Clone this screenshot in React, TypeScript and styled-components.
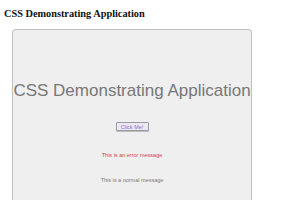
import React from "react";
import styled, { createGlobalStyle } from "styled-components";

const Global = createGlobalStyle`
  html, body { margin: 0; padding: 0; background: #ffffff; }
  body { width: 300px; height: 210px; overflow: hidden; }
`;

const Page = styled.div`
  padding: 8px 0 0 4px;
  display: flex;
  flex-direction: column;
`;

const Heading = styled.h1`
  margin: 0;
  font-family: "Liberation Serif", "Times New Roman", serif;
  font-weight: bold;
  font-size: 10.3px;
  line-height: 12px;
  color: #111;
`;

const Panel = styled.div`
  margin: 9px 0 0 8px;
  width: 240px;
  height: 171px;
  box-sizing: border-box;
  background: #efefef;
  border: 1px solid #c0c0c0;
  border-bottom: none;
  border-radius: 4px 4px 0 0;
  display: flex;
  flex-direction: column;
  align-items: center;
  padding-top: 51px;
`;

const Title = styled.div`
  font-family: "Liberation Sans", Arial, sans-serif;
  font-size: 17px;
  line-height: 20px;
  color: #777777;
  white-space: nowrap;
`;

const Button = styled.button`
  margin-top: 21px;
  width: 33px;
  height: 9px;
  padding: 0;
  box-sizing: border-box;
  background: #eae8f1;
  border: 1px solid #9a9aa4;
  border-radius: 1px;
  box-shadow: 0 1px 0 #bdbdbd;
  font-family: "Liberation Sans", Arial, sans-serif;
  font-size: 5.5px;
  line-height: 6px;
  color: #9070d0;
  display: flex;
  align-items: center;
  justify-content: center;
`;

const Message = styled.div<{ $error?: boolean; $gap: number }>`
  margin-top: ${(p) => p.$gap}px;
  font-family: "Liberation Sans", Arial, sans-serif;
  font-size: 5.5px;
  line-height: 8px;
  color: ${(p) => (p.$error ? "#d8404e" : "#7a7a7a")};
  white-space: nowrap;
`;

export default function App() {
  return (
    <>
      <Global />
      <Page>
        <Heading>CSS Demonstrating Application</Heading>
        <Panel>
          <Title>CSS Demonstrating Application</Title>
          <Button>Click Me!</Button>
          <Message $error $gap={20}>This is an error message</Message>
          <Message $gap={17}>This is a normal message</Message>
        </Panel>
      </Page>
    </>
  );
}
